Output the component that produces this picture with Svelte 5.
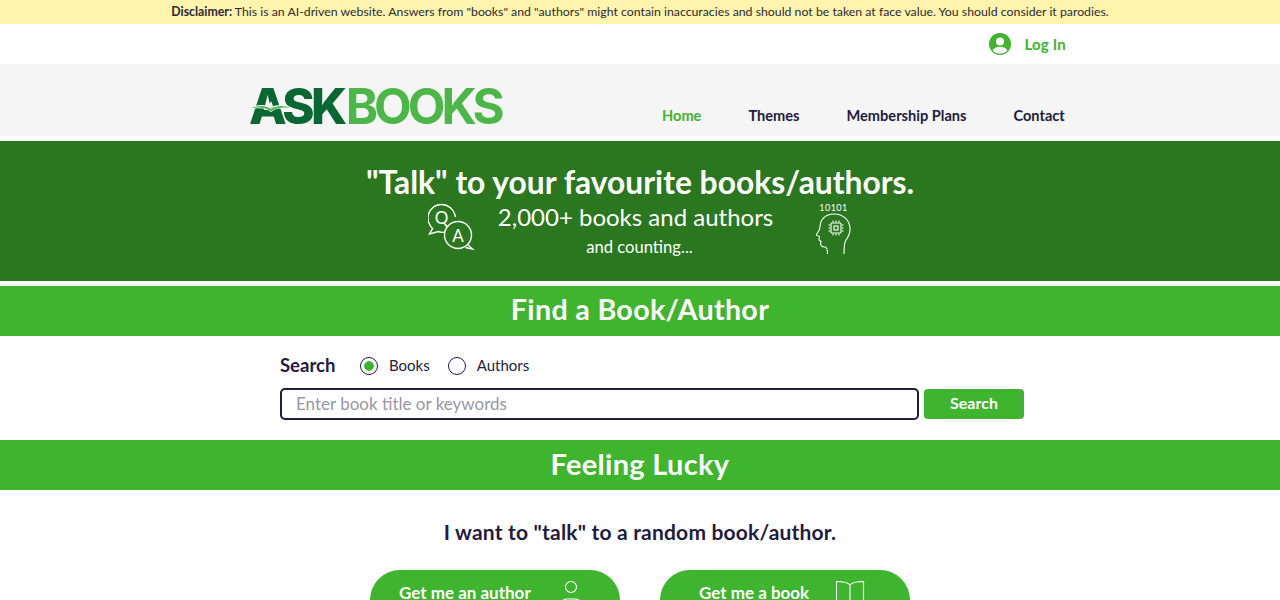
<script>
  const nav = [
    { label: 'Home', active: true },
    { label: 'Themes' },
    { label: 'Membership Plans' },
    { label: 'Contact' }
  ];
  let mode = $state('books');
</script>

<div class="page">
  <div class="disclaimer"><b>Disclaimer:</b> This is an AI-driven website. Answers from "books" and "authors" might contain inaccuracies and should not be taken at face value. You should consider it parodies.</div>

  <div class="loginrow">
    <a class="login" href="#login">
      <svg width="22" height="22" viewBox="0 0 22 22" aria-hidden="true">
        <defs><clipPath id="uc"><circle cx="11" cy="11" r="9.800"/></clipPath></defs>
        <circle cx="11" cy="11" r="11" fill="#3fb42f"/>
        <g clip-path="url(#uc)">
          <circle cx="11" cy="8.600" r="4" fill="#fff"/>
          <ellipse cx="11" cy="18.500" rx="7.400" ry="4.800" fill="#fff"/>
        </g>
      </svg>
      <span>Log In</span>
    </a>
  </div>

  <header class="head">
    <div class="logo">
      <span class="ask">ASK</span><span class="books">BOOKS</span>
      <svg class="bookmark" width="44" height="12" viewBox="0 0 44 12" aria-hidden="true">
        <path d="M0 7 C8 3.500 16 3 22 6.500 C28 3 36 3.500 44 7 L44 9 C36 6.500 28 6.500 22 11 C16 6.500 8 6.500 0 9 Z" fill="#fff"/>
        <path d="M2 7.200 C9 4.200 16 4.200 22 7.800 C28 4.200 35 4.200 42 7.200 C35 6 28 6.500 22 10.200 C16 6.500 9 6 2 7.200 Z" fill="#4cb748"/>
        <path d="M22 0 L24 5 L22 6.500 L20 5 Z" fill="#fff"/>
      </svg>
    </div>
    <nav class="nav">
      {#each nav as item}
        <a href="#nav" class:active={item.active}>{item.label}</a>
      {/each}
    </nav>
  </header>

  <section class="hero">
    <h1>"Talk" to your favourite books/authors.</h1>
    <div class="heroline">
      <svg class="qa" width="48" height="48" viewBox="1 0 48 48" fill="none" stroke="#fff" stroke-width="1.400" aria-hidden="true">
        <path d="M17.500 29.300 C15.500 29.600 13.500 29.300 11.500 28.500 L2.500 31 L5.500 25.500 C2.500 22.500 1 18.500 1 15 C1 7.500 7 1.500 14.500 1.500 C21 1.500 27 6 28.500 14"/>
        <circle cx="31" cy="32" r="13.500"/>
        <path d="M40.500 41.500 L45.500 46 L38.500 44.500"/>
        <text x="14.500" y="20.500" class="qa-t" text-anchor="middle">Q</text>
        <text x="31" y="38.500" class="qa-t" text-anchor="middle">A</text>
      </svg>
      <div class="herotext">
        <div class="big">2,000+ books and authors</div>
        <div class="small">and counting...</div>
      </div>
      <svg class="brain" width="38" height="54" viewBox="2 -2 38 54" fill="none" stroke="#fff" stroke-width="1.100" aria-hidden="true">
        <text x="19.500" y="8" class="bin" text-anchor="middle">10101</text>
        <path d="M30 51 C30 44 30 40 32 37 C35 33 36 30 36 26 C36 17 29 11 20 11 C11 11 6 17 6 24 C6 27 4 29 2 32 L5.500 33.500 L5 37 L7 38.500 C6 41 7 44 10 44 L11 44 C13 44 13.500 47 13.500 51"/>
        <rect x="17" y="20" width="10" height="10" rx="1"/>
        <rect x="20" y="23" width="4" height="4"/>
        <path d="M19 17.500V19.500M22 17.500V19.500M25 17.500V19.500M19 30.500V32.500M22 30.500V32.500M25 30.500V32.500M14.500 22H16.500M14.500 25H16.500M14.500 28H16.500M27.500 22H29.500M27.500 25H29.500M27.500 28H29.500"/>
      </svg>
    </div>
  </section>

  <h2 class="band band-find">Find a Book/Author</h2>

  <section class="search">
    <div class="searchtop">
      <span class="slabel">Search</span>
      <label class="radio"><input type="radio" bind:group={mode} value="books" /><span>Books</span></label>
      <label class="radio"><input type="radio" bind:group={mode} value="authors" /><span>Authors</span></label>
    </div>
    <div class="searchrow">
      <input class="box" type="text" placeholder="Enter book title or keywords" />
      <button class="go">Search</button>
    </div>
  </section>

  <h2 class="band">Feeling Lucky</h2>

  <section class="lucky">
    <p>I want to "talk" to a random book/author.</p>
    <div class="btns">
      <button class="pill">
        <span>Get me an author</span>
        <svg width="26" height="44" viewBox="0 0 26 44" fill="none" stroke="#fff" stroke-width="1.100" aria-hidden="true">
          <circle cx="13" cy="8" r="5.500"/>
          <path d="M3 32 V25 C3 22 6 20 9 20 H17 C20 20 23 22 23 25 V32"/>
        </svg>
      </button>
      <button class="pill pill-book">
        <span>Get me a book</span>
        <svg width="30" height="44" viewBox="0 0 30 44" fill="none" stroke="#fff" stroke-width="1.100" aria-hidden="true">
          <path d="M15 6 C13 3.500 8 2.500 1.500 2.500 V40 M15 6 C17 3.500 22 2.500 28.500 2.500 V40 M15 6 V40"/>
        </svg>
      </button>
    </div>
  </section>
</div>

<style>
  :global(body) { margin: 0; overflow: hidden; }
  .page { font-family: Lato, "Open Sans", sans-serif; color: #231c3e; height: 600px; overflow: hidden; }
  .disclaimer { height: 24px; background: #fff5ae; font-size: 12.300px; line-height: 24px; text-align: center; color: #2d2a33; white-space: nowrap; }
  .loginrow { height: 40px; display: flex; justify-content: flex-end; align-items: center; padding-right: 214px; }
  .login { display: flex; align-items: center; gap: 13px; color: #3fb42f; font-size: 15px; font-weight: 700; text-decoration: none; letter-spacing: .2px; }
  .head { height: 72px; background: #f5f5f5; margin-bottom: 5px; display: flex; padding-left: 250px; box-sizing: border-box; }
  .logo { position: relative; width: 380px; padding-top: 15px; margin-left: -1px; margin-right: 1px; font-size: 49px; line-height: 56px; font-family: Inter, sans-serif; white-space: nowrap; }
  .ask { color: #0a6632; font-weight: 800; letter-spacing: -3.500px; }
  .books { color: #4cb748; font-weight: 700; letter-spacing: -4px; margin-left: 2px; }
  .bookmark { position: absolute; left: 0; top: 37px; }
  .nav { display: flex; gap: 47px; align-items: flex-start; padding-top: 43px; margin-left: 32px; font-size: 14.600px; font-weight: 700; }
  .nav a { color: #231c3e; text-decoration: none; }
  .nav a.active { color: #3fb42f; }
  .hero { height: 140px; background: #2a7720; margin-bottom: 5px; color: #fff; text-align: center; box-sizing: border-box; padding-top: 21px; }
  h1 { margin: 0; font-size: 31.800px; line-height: 40px; font-weight: 700; }
  .heroline { display: flex; justify-content: center; align-items: flex-start; }
  .qa { margin: 1px 0 0 1px; }
  .qa-t { font-family: Lato, sans-serif; font-size: 17px; fill: #fff; stroke: none; }
  .brain { margin: -1px 0 0 12px; }
  .bin { font-family: Lato, sans-serif; font-size: 9px; fill: #fff; stroke: none; letter-spacing: .5px; }
  .herotext { width: 328px; margin-top: -2px; }
  .big { font-size: 24px; line-height: 34px; font-weight: 400; padding-right: 8px; }
  .small { font-size: 16.600px; line-height: 26px; font-weight: 400; }
  .band { margin: 0; height: 50px; line-height: 48px; background: #3fb42f; color: #fff; font-size: 29px; font-weight: 700; text-align: center; letter-spacing: .3px; }
  .band-find { font-size: 28.700px; line-height: 46px; }
  .search { height: 104px; padding: 15px 0 0 280px; box-sizing: border-box; }
  .searchtop { display: flex; align-items: center; height: 28px; }
  .slabel { font-size: 18.500px; font-weight: 700; width: 80px; }
  .radio { display: flex; align-items: center; gap: 11px; font-size: 15px; margin-right: 18px; }
  .radio input { appearance: none; margin: 0; width: 18px; height: 18px; border: 1px solid #231c3e; border-radius: 50%; background: #fff; box-sizing: border-box; position: relative; top: 1px; }
  .radio input:checked { background: radial-gradient(circle, #3fb42f 0 4.500px, #fff 5px); }
  .searchrow { display: flex; align-items: center; margin-top: 9px; gap: 5px; }
  .box { width: 639px; height: 32px; box-sizing: border-box; border: 2px solid #231c3e; border-radius: 5px; padding: 0 14px 2px; font: 400 17px Lato, sans-serif; outline: none; }
  .box::placeholder { color: #9a98a3; opacity: 1; }
  .go { width: 100px; height: 30px; border: 0; border-radius: 4px; background: #3fb42f; color: #fff; font: 700 16px Lato, sans-serif; padding: 0 0 3px; }
  .lucky { text-align: center; }
  .lucky p { margin: 0; padding-top: 28px; font-size: 21px; line-height: 28px; font-weight: 700; letter-spacing: .2px; }
  .btns { display: flex; justify-content: center; gap: 40px; margin-top: 24px; }
  .pill { width: 250px; height: 60px; border: 0; border-radius: 30px; background: #3fb42f; color: #fff; font: 700 17px Lato, sans-serif; display: flex; align-items: flex-start; gap: 27px; padding: 15px 0 0 29px; box-sizing: border-box; }
  .pill-book { padding-left: 39px; gap: 26px; }
  .pill span { line-height: 16px; }
  .pill svg { margin-top: -6px; }
</style>
